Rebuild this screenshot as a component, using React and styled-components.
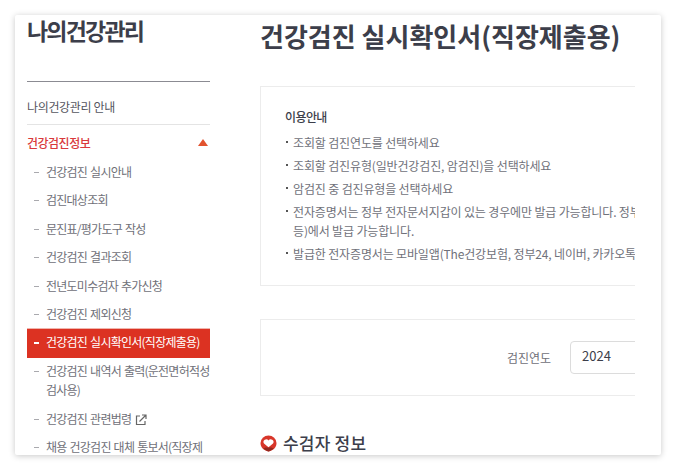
import React from "react"
import styled, { createGlobalStyle } from "styled-components"

const GlobalStyle = createGlobalStyle`
  html, body {
    margin: 0;
    padding: 0;
    background: #fff;
    font-family: "Noto Sans CJK KR", "Noto Sans", sans-serif;
  }
`

const subItems = [
  { label: "건강검진 실시안내" },
  { label: "검진대상조회" },
  { label: "문진표/평가도구 작성" },
  { label: "건강검진 결과조회" },
  { label: "전년도미수검자 추가신청" },
  { label: "건강검진 제외신청" },
  { label: "건강검진 실시확인서(직장제출용)", active: true },
  { label: "건강검진 내역서 출력(운전면허적성검사용)" },
  { label: "건강검진 관련법령", external: true },
  { label: "채용 건강검진 대체 통보서(직장제출용)" }
]

const notices = [
  "조회할 검진연도를 선택하세요",
  "조회할 검진유형(일반건강검진, 암검진)을 선택하세요",
  "암검진 중 검진유형을 선택하세요",
  "전자증명서는 정부 전자문서지갑이 있는 경우에만 발급 가능합니다. 정부24, 네이버, 카카오톡 등)에서 발급 가능합니다.",
  "발급한 전자증명서는 모바일앱(The건강보험, 정부24, 네이버, 카카오톡 등)"
]

const ExternalIcon = () => (
  <svg width="12" height="12" viewBox="0 0 12 12" fill="none" stroke="#666" strokeWidth="1.2">
    <path d="M5 2H1.5v8.5H10V7" />
    <path d="M4.5 7.5L10.5 1.5M7 1h4v4" />
  </svg>
)

const HeartIcon = () => (
  <svg width="17" height="17" viewBox="0 0 17 17">
    <path d="M8.5 16.5C3.5 15.5 .5 12 .5 8a8 7.5 0 0 1 16 0c0 4-3 7.5-8 8.5z" fill="#d8362a" />
    <path d="M3.5 13.5c1.3 1.4 3 2.5 5 3 2-.5 3.700-1.600 5-3l-2-1h-6z" fill="#93291f" />
    <path d="M8.500 12.300L4 8.600a2.700 2.700 0 0 1 4.500-3a2.700 2.700 0 0 1 4.500 3z" fill="#fff" />
  </svg>
)

export default function App() {
  return (
    <>
      <GlobalStyle />
      <Page>
        <Card>
          <Sidebar>
            <SideTitle>나의건강관리</SideTitle>
            <MenuLink>나의건강관리 안내</MenuLink>
            <MenuGroup>
              건강검진정보
              <Caret />
            </MenuGroup>
            <SubList>
              {subItems.map(item => (
                <SubItem key={item.label} $active={item.active}>
                  {item.label}
                  {item.external && (
                    <IconSlot>
                      <ExternalIcon />
                    </IconSlot>
                  )}
                </SubItem>
              ))}
            </SubList>
          </Sidebar>
          <Main>
            <PageTitle>건강검진 실시확인서(직장제출용)</PageTitle>
            <Panel>
              <NoticeTitle>이용안내</NoticeTitle>
              <NoticeList>
                {notices.map(text => (
                  <Notice key={text}>{text}</Notice>
                ))}
              </NoticeList>
            </Panel>
            <SearchPanel>
              <FieldLabel>검진연도</FieldLabel>
              <YearSelect>2024</YearSelect>
            </SearchPanel>
            <SectionTitle>
              <HeartIcon />
              수검자 정보
            </SectionTitle>
          </Main>
        </Card>
      </Page>
    </>
  )
}

const Page = styled.div`
  width: 676px;
  height: 470px;
  padding: 15px;
  box-sizing: border-box;
  overflow: hidden;
`
const Card = styled.div`
  display: flex;
  height: 440px;
  padding-left: 12px;
  box-sizing: border-box;
  overflow: hidden;
  background: #fff;
  border-radius: 2px;
  box-shadow: 0 1px 6px rgba(0, 0, 0, 0.22);
`
const Sidebar = styled.aside`
  flex: none;
  width: 183px;
`
const SideTitle = styled.h2`
  margin: 0;
  height: 66px;
  border-bottom: 1px solid #8b8b92;
  font-size: 23px;
  line-height: 30px;
  font-weight: 700;
  letter-spacing: -1.8px;
  color: #3c3e4a;
`
const MenuLink = styled.div`
  height: 42px;
  line-height: 50px;
  border-bottom: 1px solid #e4e4e4;
  font-size: 12px;
  letter-spacing: -0.35px;
  color: #555660;
`
const MenuGroup = styled.div`
  display: flex;
  align-items: center;
  justify-content: space-between;
  height: 34px;
  padding-right: 2px;
  font-size: 12px;
  font-weight: 500;
  letter-spacing: -0.5px;
  color: #d9393c;
`
const Caret = styled.i`
  width: 0;
  height: 0;
  border-left: 5px solid transparent;
  border-right: 5px solid transparent;
  border-bottom: 7px solid #e2532f;
`
const SubList = styled.ul`
  margin: 0;
  padding: 0;
  list-style: none;
`
const SubItem = styled.li`
  position: relative;
  padding: 3px 0 6px 19px;
  font-size: 12px;
  line-height: 19.4px;
  letter-spacing: -0.75px;
  word-spacing: 1px;
  color: ${p => (p.$active ? "#fff" : "#6f7078")};
  background: ${p => (p.$active ? "#dc3222" : "transparent")};
  box-shadow: ${p => (p.$active ? "0 -1px 0 #f0b4ac" : "none")};
  &::before {
    content: "";
    position: absolute;
    left: 7px;
    top: 13px;
    width: 5px;
    height: ${p => (p.$active ? "2px" : "1px")};
    background: ${p => (p.$active ? "#fff" : "#a9a9ae")};
  }
`
const IconSlot = styled.span`
  display: inline-block;
  margin-left: 4px;
  vertical-align: -2px;
  line-height: 0;
`
const Main = styled.main`
  flex: none;
  width: 375px;
  margin-left: 50px;
  overflow: hidden;
`
const PageTitle = styled.h1`
  margin: 0 0 27px;
  height: 44px;
  font-size: 26px;
  line-height: 42px;
  font-weight: 700;
  letter-spacing: 0;
  white-space: nowrap;
  color: #3c3e4a;
`
const Panel = styled.section`
  width: 560px;
  height: 200px;
  padding: 20px 0 0 24px;
  box-sizing: border-box;
  border: 1px solid #ececec;
`
const NoticeTitle = styled.h3`
  margin: 0 0 7px;
  font-size: 12px;
  line-height: 19px;
  font-weight: 500;
  letter-spacing: -0.6px;
  color: #3c3e4a;
`
const NoticeList = styled.ul`
  margin: 0;
  padding: 0;
  width: 465px;
  list-style: none;
`
const Notice = styled.li`
  position: relative;
  margin-bottom: 4px;
  padding-left: 8px;
  font-size: 12px;
  line-height: 19px;
  letter-spacing: -0.15px;
  word-break: keep-all;
  color: #70717a;
  &::before {
    content: "";
    position: absolute;
    left: 1px;
    top: 8px;
    width: 2px;
    height: 2px;
    background: #555;
  }
`
const SearchPanel = styled.section`
  display: flex;
  align-items: center;
  width: 560px;
  height: 77px;
  margin-top: 33px;
  padding-left: 246px;
  box-sizing: border-box;
  border: 1px solid #ececec;
`
const FieldLabel = styled.label`
  width: 63px;
  margin-top: -1px;
  font-size: 12px;
  color: #6f7078;
`
const YearSelect = styled.div`
  width: 200px;
  height: 33px;
  margin-top: -1px;
  padding-left: 11px;
  box-sizing: border-box;
  border: 1px solid #dcdcdc;
  border-radius: 4px;
  font-size: 13px;
  line-height: 28px;
  color: #3c3e4a;
`
const SectionTitle = styled.h3`
  display: flex;
  align-items: center;
  gap: 6px;
  margin: 35px 0 0;
  font-size: 17px;
  line-height: 24px;
  font-weight: 500;
  letter-spacing: 0.2px;
  color: #3c3e4a;
`
